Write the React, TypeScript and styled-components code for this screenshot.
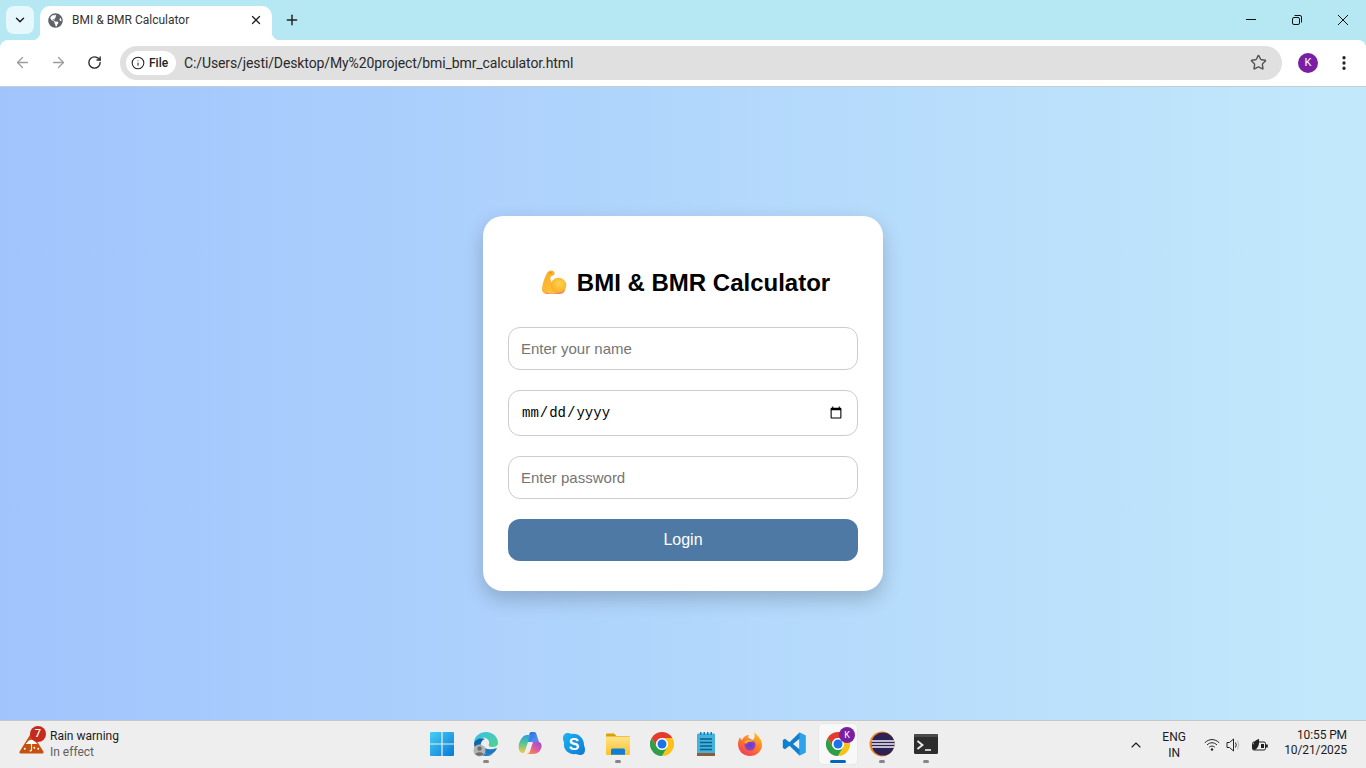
import React from "react";
import styled, { createGlobalStyle } from "styled-components";
import { ArrowLeft, ArrowRight, ChevronDown, ChevronUp, Info, MoreVertical, Plus, RotateCw, Star, X } from "lucide-react";
import { FaGlobeAmericas } from "react-icons/fa";

const Global = createGlobalStyle`
  html, body { margin: 0; padding: 0; height: 100%; overflow: hidden; }
  * { box-sizing: border-box; }
  body { font-family: "Liberation Sans", Arial, sans-serif; }
`;

const UI = `Roboto, "Noto Sans", sans-serif`;

const Screen = styled.div`
  width: 1366px; height: 768px; display: flex; flex-direction: column;
`;

const TabStrip = styled.div`
  height: 40px; background: #b6e8f3; display: flex; align-items: flex-end; padding-left: 6px;
  font-family: ${UI};
`;
const TabSearch = styled.div`
  width: 28px; height: 28px; margin-bottom: 6px; border-radius: 8px; background: #e6f8fc;
  display: flex; align-items: center; justify-content: center; color: #1f1f1f;
`;
const Tab = styled.div`
  position: relative; width: 232px; height: 34px; margin-left: 6px; background: #fff;
  border-radius: 10px 10px 0 0; display: flex; align-items: center; padding: 0 9px 6px 8px;
  color: #333; font-size: 12px;
  &::before, &::after {
    content: ""; position: absolute; bottom: 0; width: 8px; height: 8px;
  }
  &::before { left: -8px; background: radial-gradient(circle at 0 0, transparent 8px, #fff 8.5px); }
  &::after { right: -8px; background: radial-gradient(circle at 100% 0, transparent 8px, #fff 8.5px); }
`;
const TabTitle = styled.span`
  flex: 1; margin-left: 9px;
`;
const TabClose = styled.span`
  display: flex; color: #222;
`;
const NewTab = styled.div`
  width: 24px; height: 24px; margin: 0 0 8px 8px; display: flex; align-items: center; justify-content: center; color: #222;
`;
const WindowControls = styled.div`
  margin-left: auto; height: 40px; display: flex;
`;
const WindowButton = styled.div`
  width: 46px; height: 40px; display: flex; align-items: center; justify-content: center; color: #111;
`;

const Toolbar = styled.div`
  height: 47px; background: #b6e8f3; font-family: ${UI};
`;
const ToolbarInner = styled.div`
  height: 47px; background: #fff; border-radius: 8px 8px 0 0; border-bottom: 1px solid #c9cdd0;
  display: flex; align-items: center; padding: 0 10px 1px 0;
`;
const NavButton = styled.div<{ $muted?: boolean }>`
  width: 36px; height: 34px; display: flex; align-items: center; justify-content: center;
  color: ${p => (p.$muted ? "#9a9c9d" : "#2b2b2b")};
`;
const NavGroup = styled.div`
  display: flex; padding-left: 4px; width: 120px;
`;
const Omnibox = styled.div`
  width: 1162px; height: 34px; border-radius: 17px; background: #e0e0e0;
  display: flex; align-items: center; padding: 0 15px 0 6px;
`;
const SecurityChip = styled.div`
  width: 50px; height: 24px; border-radius: 12px; background: #fff; display: flex; align-items: center;
  padding-left: 5px; gap: 4px; font-size: 12px; font-weight: 500; color: #222;
`;
const Url = styled.span`
  flex: 1; margin-left: 8px; padding-top: 1px; font-size: 14px; color: #2a2a2a; letter-spacing: -0.11px;
`;
const Avatar = styled.div`
  width: 20px; height: 20px; border-radius: 50%; background: #7b1fa2; color: #fff; margin-left: 16px;
  font-size: 11px; display: flex; align-items: center; justify-content: center;
`;
const MenuButton = styled.div`
  margin-left: 17px; display: flex; color: #222;
`;

const Main = styled.main`
  flex: 1; background: linear-gradient(to right, #a1c4fd, #c2e9fb);
  display: flex; align-items: center; justify-content: center; padding-bottom: 1px;
`;
const Card = styled.form`
  width: 400px; height: 375px; background: #fff; border-radius: 20px; padding: 53px 25px 30px;
  box-shadow: 0 8px 20px rgba(0, 0, 0, 0.2); display: flex; flex-direction: column;
`;
const Title = styled.h2`
  margin: 0 0 31px; height: 27px; padding-left: 5px; font-size: 24px; line-height: 27px; font-weight: 700; color: #000;
  display: flex; align-items: center; justify-content: center; gap: 10px;
`;
const Fields = styled.div`
  display: flex; flex-direction: column; gap: 20px;
`;
const Field = styled.input`
  width: 350px; height: 43px; padding: 1px 12px 0; border: 1px solid #ccc; border-radius: 12px; outline: none;
  font-family: "Liberation Sans", Arial, sans-serif; font-size: 15px; color: #000; background: #fff;
  &::placeholder { color: #757575; opacity: 1; }
`;
const DateField = styled(Field)`
  height: 46px; padding-top: 1px; font-family: "Liberation Mono", "DejaVu Sans Mono", monospace; font-size: 14px;
  &::-webkit-calendar-picker-indicator { margin-right: 0; }
`;
const Submit = styled.button`
  width: 350px; height: 42px; border: 0; border-radius: 12px; background: #4e79a5; color: #fff;
  font-family: "Liberation Sans", Arial, sans-serif; font-size: 16px;
`;

const Taskbar = styled.footer`
  height: 48px; background: #eeeeee; border-top: 1px solid #c6c6c6; display: grid;
  grid-template-columns: 420px 528px 1fr; font-family: ${UI};
`;
const Weather = styled.div`
  display: flex; align-items: center; padding-left: 18px; gap: 5px;
`;
const WeatherIconWrap = styled.div`
  position: relative; width: 27px; height: 30px; margin-top: -10px; padding-left: 1px; display: flex; align-items: flex-end;
`;
const WeatherBadge = styled.span`
  position: absolute; top: 1px; right: -1px; width: 16px; height: 16px; border-radius: 50%; background: #c42b1c;
  color: #fff; font-size: 11px; font-weight: 500; display: flex; align-items: center; justify-content: center;
`;
const WeatherText = styled.div`
  display: flex; flex-direction: column; margin-top: -2px; font-size: 12px; line-height: 16px; color: #1b1b1b;
`;
const WeatherSub = styled.span`
  color: #5f5f5f;
`;
const Apps = styled.div`
  display: flex;
`;
const AppSlot = styled.div<{ $active?: boolean }>`
  position: relative; width: 44px; height: 47px; display: flex; align-items: center; justify-content: center;
  padding-bottom: 2px;
  ${p => p.$active && `&::before { content: ""; position: absolute; left: 3px; top: 3px; width: 38px; height: 40px; border-radius: 4px; background: #f8f8f8; box-shadow: 0 0 0 1px #e8e8e8; }`}
  & > svg { position: relative; }
`;
const RunDot = styled.span<{ $active?: boolean }>`
  position: absolute; bottom: 5px; left: 50%; height: 3px; border-radius: 2px;
  width: ${p => (p.$active ? 16 : 6)}px; margin-left: ${p => (p.$active ? -8 : -3)}px;
  background: ${p => (p.$active ? "#0067c0" : "#858585")};
`;
const AppBadge = styled.span`
  position: absolute; top: 6px; right: 5px; width: 16px; height: 16px; border-radius: 50%; background: #7b1fa2;
  color: #fff; font-size: 9px; display: flex; align-items: center; justify-content: center;
`;
const Tray = styled.div`
  display: flex; align-items: center; justify-content: flex-end; padding-right: 19px; color: #1b1b1b; font-size: 12px;
`;
const Caret = styled.span`
  display: flex; margin-right: 10px;
`;
const Lang = styled.div`
  width: 40px; text-align: center; line-height: 16px; margin-right: 10px;
`;
const TrayIcons = styled.div`
  display: flex; align-items: center; gap: 6px; margin-right: 15px;
  & > svg:last-child { margin-left: 3px; }
`;
const Clock = styled.div`
  text-align: right; line-height: 15px; margin-top: -3px; white-space: nowrap; letter-spacing: -0.1px;
`;

const Biceps = () => (
  <svg width="26" height="26" viewBox="0 0 26 26">
    <defs>
      <linearGradient id="bi" x1="0" y1="0" x2="0.9" y2="1"><stop offset="0" stopColor="#f9a825" /><stop offset="1" stopColor="#ffc83d" /></linearGradient>
      <radialGradient id="bi2" cx="0.55" cy="0.4" r="0.6"><stop offset="0" stopColor="#ffd54a" /><stop offset="1" stopColor="#fbab2a" /></radialGradient>
    </defs>
    <path d="M1 21 C1 15 4 8 6 4 C7 2 10 1 12 2 C14 3 14 5 13 6 C12 7 10 7 9.500 8 C9 10 10 12 11 14 C12 12 14 11 17 10.500 L20 24 H5 C2.500 24 1 23 1 21 Z" fill="url(#bi)" />
    <circle cx="17.500" cy="16.500" r="7.800" fill="url(#bi2)" />
    <path d="M2 22.500 C5 25 21 25.500 24.500 20 C23 25 20 25 17 25 H6 C4 25 2.800 24 2 22.500 Z" fill="#f08a5d" />
    <circle cx="9.500" cy="3.800" r="0.900" fill="#f57c00" />
  </svg>
);

const Minimize = () => (
  <svg width="12" height="12" viewBox="0 0 12 12"><rect x="1" y="5" width="10" height="1" fill="#111" /></svg>
);

const Restore = () => (
  <svg width="12" height="12" viewBox="0 0 12 12" fill="none" stroke="#111" strokeWidth="1">
    <rect x="1.500" y="3.500" width="7" height="7" rx="1.500" />
    <path d="M3.500 1.500 H9 A1.500 1.500 0 0 1 10.500 3 V8.500" />
  </svg>
);

const CloseWin = () => (
  <svg width="12" height="12" viewBox="0 0 12 12" fill="none" stroke="#111" strokeWidth="1"><path d="M1 1 L11 11 M11 1 L1 11" /></svg>
);

const WeatherIcon = () => (
  <svg width="25" height="24" viewBox="0 0 26 24">
    <path d="M13 1 L25.500 21 Q26 23 24 23 H2 Q0 23 .5 21 Z" fill="#c8500f" />
    <path d="M7 13 Q13 4 19 13 Z" fill="#fff" />
    <path d="M13 12 V19 Q13 20.500 11 20" stroke="#fff" strokeWidth="1.200" fill="none" />
    <circle cx="6" cy="18" r="1" fill="#fff" /><circle cx="20" cy="18" r="1" fill="#fff" /><circle cx="16" cy="17" r="1" fill="#fff" />
  </svg>
);

const WindowsLogo = () => (
  <svg width="24" height="24" viewBox="0 0 24 24">
    <defs><linearGradient id="w" x1="0" y1="0" x2="1" y2="1"><stop offset="0" stopColor="#45d0f5" /><stop offset="1" stopColor="#0a78d6" /></linearGradient></defs>
    <path d="M0 1 a1 1 0 0 1 1-1 H11.400 V11.400 H0 Z M12.600 0 H23 a1 1 0 0 1 1 1 V11.400 H12.600 Z M0 12.600 H11.400 V24 H1 a1 1 0 0 1-1-1 Z M12.600 12.600 H24 V23 a1 1 0 0 1-1 1 H12.600 Z" fill="url(#w)" />
  </svg>
);

const Edge = () => (
  <svg width="26" height="26" viewBox="0 0 26 26">
    <defs>
      <linearGradient id="e1" x1="0" y1="0" x2="1" y2="1"><stop offset="0" stopColor="#35c1f1" /><stop offset="1" stopColor="#53d18a" /></linearGradient>
      <linearGradient id="e2" x1="0" y1="0" x2="1" y2="1"><stop offset="0" stopColor="#0c59a4" /><stop offset="1" stopColor="#1b8ad6" /></linearGradient>
    </defs>
    <path d="M1 12 C1 5 7 1 13 1 C20 1 25 6 25 12 C25 15 22 16 19 16 C16 16 15 14.500 16 13 C17 9 13 6 9 7 C5 8 3 10 1 12 Z" fill="url(#e1)" />
    <path d="M1 12 C3 8 8 6 12 8 C9 9 7 12 8 16 C9 21 14 25 20 23 C17 25 15 25 13 25 C6 25 1 19 1 12 Z" fill="url(#e2)" />
    <path d="M16 24 C12 23 9 19 10 15 C12 19 18 19 24 17 C23 20 20 23 16 24 Z" fill="#1b78c8" />
    <circle cx="6.500" cy="19.500" r="6" fill="#b4b4b4" />
    <circle cx="6.500" cy="17.500" r="2.200" fill="#6e6e6e" />
    <path d="M2.500 23.500 C3 20.500 10 20.500 10.500 23.500 Q6.500 26 2.500 23.500 Z" fill="#6e6e6e" />
  </svg>
);

const Copilot = () => (
  <svg width="24" height="24" viewBox="0 0 24 24">
    <defs>
      <linearGradient id="c1" x1="0" y1="0" x2="1" y2="1"><stop offset="0" stopColor="#1b66e0" /><stop offset="0.6" stopColor="#4f8cf0" /><stop offset="1" stopColor="#a35cd8" /></linearGradient>
      <linearGradient id="c2" x1="0" y1="1" x2="1" y2="0"><stop offset="0" stopColor="#f5a623" /><stop offset="0.5" stopColor="#e45a9c" /><stop offset="1" stopColor="#8b4fd8" /></linearGradient>
      <linearGradient id="c3" x1="0" y1="1" x2="0" y2="0"><stop offset="0" stopColor="#f7c843" /><stop offset="0.6" stopColor="#49c39e" /><stop offset="1" stopColor="#2b9fe0" /></linearGradient>
    </defs>
    <path d="M13 0 H16 C18 0 18.500 2 19 4 L22 13 C21 10 18 10 15 10 H9 C11 6 11 0 13 0 Z" fill="url(#c1)" />
    <path d="M9 3 H14 C11 4 11 8 9 13 L7 19 C6 21 5 21.500 4 21 C1 20 0 16 1 12 C2 8 5 3 9 3 Z" fill="url(#c3)" />
    <path d="M15 10 H20 C23 10 24 13 23.500 15 C22.500 19 20 22 15 22 H8 C10 22 11.500 21 12 19 Z" fill="url(#c2)" />
  </svg>
);

const Skype = () => (
  <svg width="24" height="24" viewBox="0 0 24 24">
    <defs><linearGradient id="s" x1="0" y1="0" x2="1" y2="1"><stop offset="0" stopColor="#1fb4f2" /><stop offset="1" stopColor="#0a78d4" /></linearGradient></defs>
    <path d="M6 1 C8 1 9 2 10 2 C16 1 22 6 22 13 C22 14 23 15 23 18 C23 21 21 23 18 23 C16 23 15 22 14 22 C7 23 1 18 2 11 C2 10 1 9 1 6 C1 3 3 1 6 1 Z" fill="url(#s)" />
    <text x="12" y="17.500" textAnchor="middle" fontFamily="Liberation Sans, sans-serif" fontWeight="700" fontSize="16" fill="#fff">S</text>
  </svg>
);

const Folder = () => (
  <svg width="24" height="22" viewBox="0 0 24 22">
    <defs><linearGradient id="f" x1="0" y1="0" x2="0" y2="1"><stop offset="0" stopColor="#ffe38a" /><stop offset="1" stopColor="#fbc02d" /></linearGradient></defs>
    <path d="M0 1.500 Q0 .5 1 .5 H8 L10.500 3 H23 Q24 3 24 4 V6 H0 Z" fill="#d9a000" />
    <path d="M0 3.500 H24 V21 Q24 22 23 22 H1 Q0 22 0 21 Z" fill="url(#f)" />
    <path d="M5 21.800 V17 Q5 15.500 6.500 15.500 H17.500 Q19 15.500 19 17 V21.800 Z" fill="#0f7fd1" />
  </svg>
);

const Chrome = () => (
  <svg width="24" height="24" viewBox="0 0 24 24">
    <path d="M1.600 6 A12 12 0 0 1 22.400 6 H12 A6 6 0 0 0 6.800 15 Z" fill="#e33b2e" />
    <path d="M22.400 6 A12 12 0 0 1 12 24 L17.200 15 A6 6 0 0 0 12 6 Z" fill="#fbc116" />
    <path d="M12 24 A12 12 0 0 1 1.600 6 L6.800 15 A6 6 0 0 0 17.200 15 Z" fill="#2f9e44" />
    <circle cx="12" cy="12" r="5.800" fill="#fff" />
    <circle cx="12" cy="12" r="4.500" fill="#1a73e8" />
  </svg>
);

const Notepad = () => (
  <svg width="20" height="24" viewBox="0 0 20 24">
    <rect x="1" y="1.500" width="18" height="20" rx="1" fill="#43b3dd" />
    <rect x="1" y="21" width="18" height="3" fill="#8c5a3c" />
    <rect x="4" y="0" width="1.500" height="3" fill="#0e7fb8" /><rect x="7.500" y="0" width="1.500" height="3" fill="#0e7fb8" /><rect x="11" y="0" width="1.500" height="3" fill="#0e7fb8" /><rect x="14.500" y="0" width="1.500" height="3" fill="#0e7fb8" />
    <path d="M4 7 H16 M4 10.500 H16 M4 14 H16 M4 17.500 H16" stroke="#0b5f8e" strokeWidth="1.500" />
  </svg>
);

const Firefox = () => (
  <svg width="24" height="24" viewBox="0 0 24 24">
    <defs>
      <linearGradient id="ff" x1="0.8" y1="0" x2="0.2" y2="1"><stop offset="0" stopColor="#ffc21a" /><stop offset="0.5" stopColor="#ff7a2b" /><stop offset="1" stopColor="#f03a5a" /></linearGradient>
      <radialGradient id="ff2"><stop offset="0" stopColor="#5b3fd0" /><stop offset="1" stopColor="#9a3fc0" /></radialGradient>
    </defs>
    <path d="M16 0 C19 3 24 7 24 13 C24 19 19 24 12 24 C5 24 0 19 0 12 C0 9 1 7 2 5 C2.500 7 3 8 4 8 C5 5 8 3 11 3 C9 6 12 7 15 8 C17 6 17 3 16 0 Z" fill="url(#ff)" />
    <circle cx="12" cy="13" r="5.500" fill="url(#ff2)" />
    <path d="M6 10 C9 7 14 7 17 10 C14 9 10 9.500 8 12 Z" fill="#ffb020" />
  </svg>
);

const VSCode = () => (
  <svg width="24" height="24" viewBox="0 0 24 24">
    <path d="M17.500 0.500 L23.500 3.400 V20.600 L17.500 23.500 L7.500 13.800 L3 17.200 L.8 16 V8 L3 6.800 L7.500 10.200 Z M17.500 6.800 L11 12 L17.500 17.200 Z" fill="#0f80cc" fillRule="evenodd" />
    <path d="M17.500 0.500 L23.500 3.400 V20.600 L17.500 23.500 Z" fill="#2aa3ea" />
  </svg>
);

const Eclipse = () => (
  <svg width="26" height="26" viewBox="0 0 26 26">
    <circle cx="13" cy="13" r="12.500" fill="#f08a24" />
    <circle cx="14" cy="13" r="11.500" fill="#2c2255" />
    <path d="M2.500 10 H25 M2.500 13 H25.500 M3 16 H25" stroke="#f2f0f6" strokeWidth="1.500" />
  </svg>
);

const Terminal = () => (
  <svg width="24" height="20" viewBox="0 0 24 20">
    <rect width="24" height="20" rx="1.500" fill="#2d2d2d" />
    <rect width="24" height="3" rx="1" fill="#4a4a4a" />
    <path d="M3.500 7 L8.500 11 L3.500 15" stroke="#eee" strokeWidth="1.800" fill="none" />
    <path d="M11 16 H17" stroke="#eee" strokeWidth="1.600" />
  </svg>
);

const Wifi = () => (
  <svg width="16" height="14" viewBox="0 0 16 14" fill="none" stroke="#222" strokeWidth="1">
    <path d="M.8 4.800 C5 .5 11 .5 15.200 4.800" />
    <path d="M3 7 C6 4 10 4 13 7" />
    <path d="M5.200 9.200 C7 7.700 9 7.700 10.800 9.200" />
    <circle cx="8" cy="11.500" r="1.200" fill="#222" stroke="none" />
  </svg>
);

const Speaker = () => (
  <svg width="16" height="16" viewBox="0 0 16 16" fill="none" stroke="#222" strokeWidth="1">
    <path d="M1 5.500 H3.500 L7.500 2 V14 L3.500 10.500 H1 Z" />
    <path d="M9.500 5.500 Q11 8 9.500 10.500" />
    <path d="M11.500 3.500 Q14 8 11.500 12.500" stroke="#bbb" />
  </svg>
);

const Battery = () => (
  <svg width="18" height="14" viewBox="0 0 18 14">
    <rect x="1.500" y="4" width="13" height="8" rx="1.500" fill="none" stroke="#222" />
    <rect x="15" y="6.500" width="1.800" height="3" fill="#222" />
    <path d="M1.500 11 C1.500 6 3.500 2 8 1 C8.500 6 7.500 10 3.500 12 Z" fill="#222" />
    <path d="M10 6 H13 V10 H10 Z" fill="#222" />
  </svg>
);

const apps: { icon: React.ReactNode; dot?: boolean; active?: boolean; badge?: string }[] = [
  { icon: <WindowsLogo /> },
  { icon: <Edge />, dot: true },
  { icon: <Copilot /> },
  { icon: <Skype /> },
  { icon: <Folder />, dot: true },
  { icon: <Chrome /> },
  { icon: <Notepad /> },
  { icon: <Firefox /> },
  { icon: <VSCode /> },
  { icon: <Chrome />, active: true, badge: "K" },
  { icon: <Eclipse />, dot: true },
  { icon: <Terminal />, dot: true },
];

export default function App() {
  return (
    <Screen>
      <Global />
      <TabStrip>
        <TabSearch><ChevronDown size={14} strokeWidth={2.5} /></TabSearch>
        <Tab>
          <FaGlobeAmericas size={15} color="#5f6368" />
          <TabTitle>BMI &amp; BMR Calculator</TabTitle>
          <TabClose><X size={14} strokeWidth={2.2} /></TabClose>
        </Tab>
        <NewTab><Plus size={16} strokeWidth={2.2} /></NewTab>
        <WindowControls>
          <WindowButton><Minimize /></WindowButton>
          <WindowButton><Restore /></WindowButton>
          <WindowButton><CloseWin /></WindowButton>
        </WindowControls>
      </TabStrip>
      <Toolbar>
        <ToolbarInner>
          <NavGroup>
            <NavButton $muted><ArrowLeft size={17} strokeWidth={1.8} /></NavButton>
            <NavButton $muted><ArrowRight size={17} strokeWidth={1.8} /></NavButton>
            <NavButton><RotateCw size={15} strokeWidth={2.2} /></NavButton>
          </NavGroup>
          <Omnibox>
            <SecurityChip><Info size={14} strokeWidth={1.8} />File</SecurityChip>
            <Url>C:/Users/jesti/Desktop/My%20project/bmi_bmr_calculator.html</Url>
            <Star size={17} strokeWidth={2} color="#555" />
          </Omnibox>
          <Avatar>K</Avatar>
          <MenuButton><MoreVertical size={18} strokeWidth={2.4} /></MenuButton>
        </ToolbarInner>
      </Toolbar>
      <Main>
        <Card onSubmit={e => e.preventDefault()}>
          <Title><Biceps />BMI &amp; BMR Calculator</Title>
          <Fields>
            <Field type="text" placeholder="Enter your name" />
            <DateField type="date" />
            <Field type="password" placeholder="Enter password" />
            <Submit type="submit">Login</Submit>
          </Fields>
        </Card>
      </Main>
      <Taskbar>
        <Weather>
          <WeatherIconWrap>
            <WeatherIcon />
            <WeatherBadge>7</WeatherBadge>
          </WeatherIconWrap>
          <WeatherText>
            <span>Rain warning</span>
            <WeatherSub>In effect</WeatherSub>
          </WeatherText>
        </Weather>
        <Apps>
          {apps.map((a, i) => (
            <AppSlot key={i} $active={a.active}>
              {a.icon}
              {a.badge && <AppBadge>{a.badge}</AppBadge>}
              {(a.dot || a.active) && <RunDot $active={a.active} />}
            </AppSlot>
          ))}
        </Apps>
        <Tray>
          <Caret><ChevronUp size={16} strokeWidth={1.6} /></Caret>
          <Lang>ENG<br />IN</Lang>
          <TrayIcons><Wifi /><Speaker /><Battery /></TrayIcons>
          <Clock>10:55 PM<br />10/21/2025</Clock>
        </Tray>
      </Taskbar>
    </Screen>
  );
}
